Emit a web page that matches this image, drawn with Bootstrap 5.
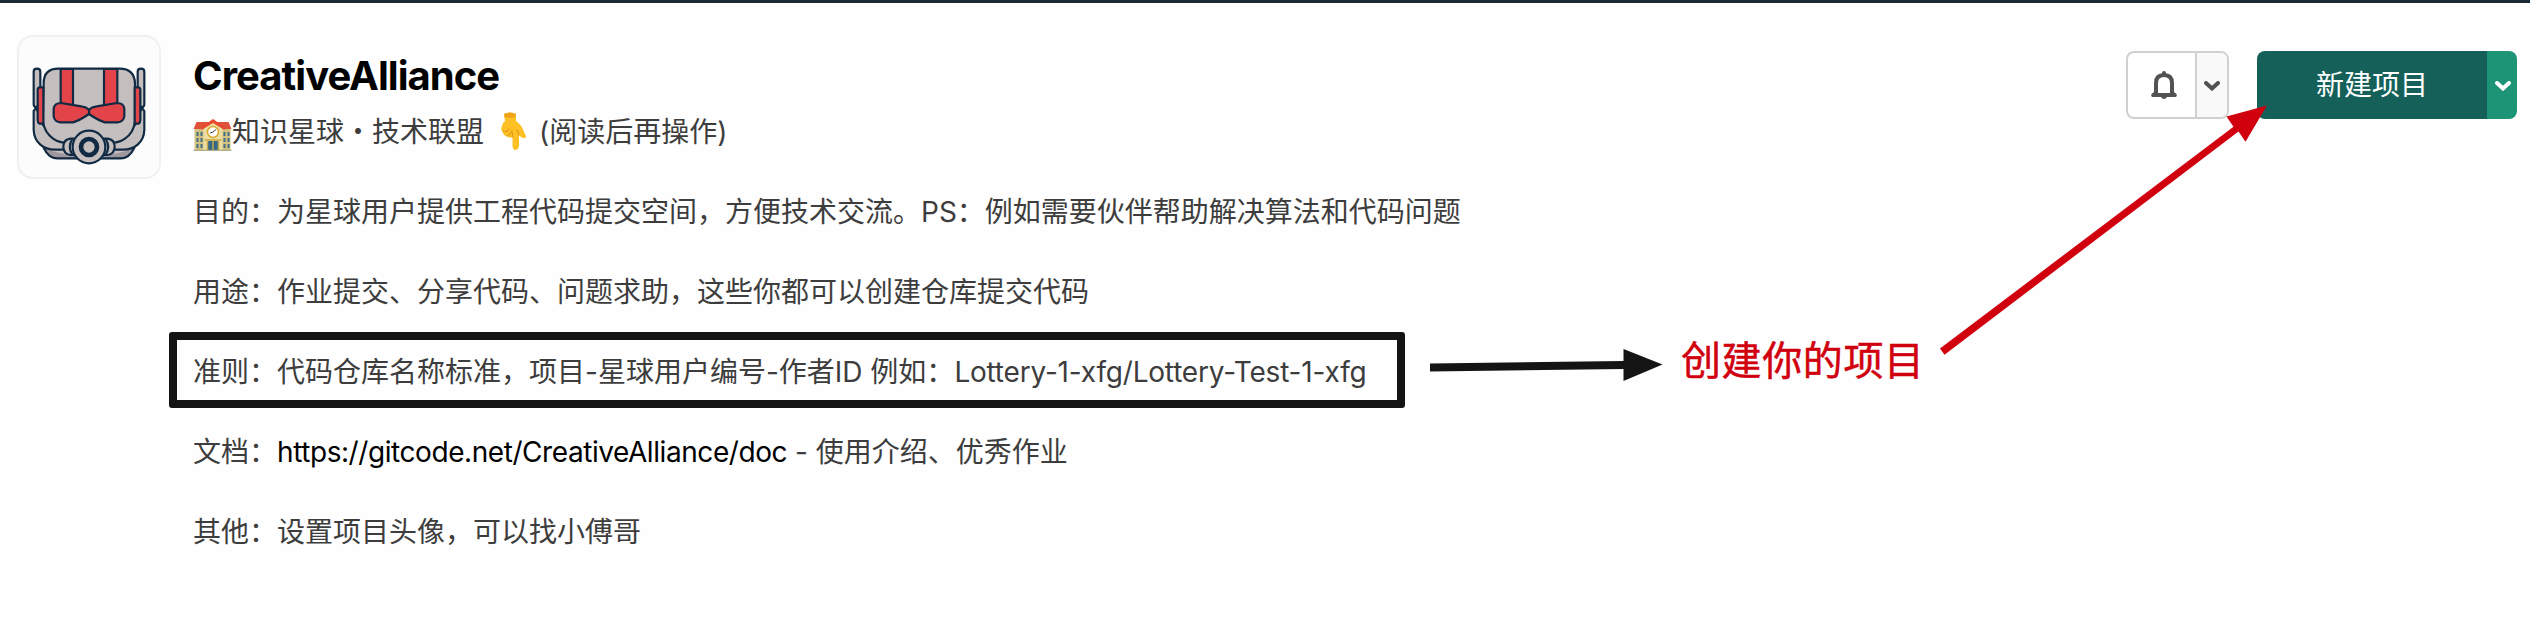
<!DOCTYPE html>
<html lang="zh-CN">
<head>
<meta charset="utf-8">
<title>CreativeAlliance</title>
<link href="https://cdn.jsdelivr.net/npm/bootstrap@5.3.0/dist/css/bootstrap.min.css" rel="stylesheet">
<style>
body{font-family:Inter,"Noto Sans CJK SC",sans-serif;background:#fefefe;color:#3d3d3d;height:618px;overflow:hidden}
svg{display:block}
.topline{height:3px;background:#1c2936}
.avatar{width:144px;height:144px;border:2px solid #f0f0f0;border-radius:16px;background:#fcfcfc}
.group-head{padding:32px 13px 0 17px;gap:32px}
.group-name{font-size:40px;line-height:48px;font-weight:700;color:#000;letter-spacing:-.95px;margin:17px 0 0}
.intro{font-size:28px;line-height:40px;white-space:nowrap}
.intro p{margin:0 0 40px;height:40px}
.intro .subtitle{margin-top:12px}
.intro a{color:#000;text-decoration:none;letter-spacing:-.43px}
.repo{letter-spacing:-.2px}
.school{width:39px;height:32px;margin-top:5px}
.hand{width:28px;height:38px;margin:-2px 11px 0 16px}
.rule-box{border:8px solid #141414;border-radius:3px;left:-24px;top:-20px;width:1236px;height:76px}
.actions{padding-top:16px;gap:28px}
.split{height:68px;border-radius:8px;overflow:hidden}
.btn-notify{width:103px;border:2px solid #d0d0d0;background:#fff}
.btn-notify .drop{width:32px;background:#f9f9f9;border-left:2px solid #d0d0d0}
.btn-create{width:260px;color:#fff;font-size:28px;font-weight:500}
.btn-create .main-part{background:#15615a}
.btn-create .drop{width:30px;background:#1c9475}
.split button{border:0;padding:0;background:none;color:inherit}
.drop svg{margin-top:2px}
.btn-create .drop svg{margin-left:2px}
.note-text{left:1681px;top:331px;font-size:40px;line-height:60px;letter-spacing:.6px;color:#d1000e;-webkit-text-stroke:.5px #d1000e}
.arrows{left:0;top:0;pointer-events:none}
</style>
</head>
<body class="position-relative">
<div class="topline"></div>
<header class="group-head d-flex align-items-start">
  <div class="avatar flex-shrink-0">
    <svg width="140" height="140" viewBox="57 111 420 420" stroke="#102a43" stroke-width="6.5" stroke-linejoin="round" stroke-linecap="round" fill="#c4bebe">
      <path d="M131 443Q146 475 172 475H362Q388 475 403 443Z" fill="#9f979e"/>
      <path d="M145 449Q190 467 267 467T389 449L398 430H136Z" stroke="none"/>
      <path d="M101 313V215Q101 206 111 206T121 215V313L108 322Q101 321 101 313ZM433 313V215Q433 206 423 206T413 215V313L426 322Q433 321 433 313Z"/>
      <path d="M109 323L101 333V390Q102 417 121 434Q138 449 165 449H369Q396 449 413 434Q432 417 433 390V333L425 323L405 375H129Z"/>
      <path d="M131 250Q131 206 175 206H359Q403 206 405 250V365Q401 398 375 416Q356 430 320 430H216Q178 430 159 416Q133 396 129 365Z"/>
      <path d="M182 207H219V318H182ZM312 207H352V318H312Z" fill="#e34449"/>
      <path d="M161 325Q164 309 183 309L244 319Q259 321 267 329Q275 321 290 319L351 309Q370 309 373 325V350Q370 366 352 367H315Q296 362 267 342Q238 362 219 367H182Q164 366 161 350Z" fill="#e34449"/>
      <path d="M267 328V341"/>
      <path d="M118 262H130V371H118Q113 368 113 360V270Q113 263 118 262ZM416 262H404V371H416Q421 368 421 360V270Q421 263 416 262Z" fill="#e34449"/>
      <path d="M235 416H211Q190 419 190 440T211 465H235ZM299 416H323Q344 419 344 440T323 465H299Z"/>
      <path d="M216 419Q203 440 216 462M318 419Q331 440 318 462" fill="none"/>
      <circle cx="267" cy="441" r="49"/>
      <circle cx="267" cy="441" r="24" stroke-width="14"/>
    </svg>
  </div>
  <div class="flex-grow-1">
    <h1 class="group-name">CreativeAlliance</h1>
    <div class="intro">
      <p class="subtitle d-flex align-items-center">
        <svg class="school" viewBox="0 0 38 32">
          <path d="M1 9H37V31H1Z" fill="#d3c17e"/>
          <path d="M3 3H35L38 10H0Z" fill="#e0533a"/>
          <path d="M10 9L19.5 2L29 9V31H10Z" fill="#ecdda3"/>
          <path d="M8 8L19.5 0L31 8V11L19.5 4L8 11Z" fill="#e8492f"/>
          <path d="M3 13h2v4H3zm4 0h2v4H7zM3 19h2v4H3zm4 0h2v4H7zM3 25h2v4H3zm4 0h2v4H7zM30 13h2v4h-2zm4 0h2v4h-2zm-4 6h2v4h-2zm4 0h2v4h-2zm-4 6h2v4h-2zm4 0h2v4h-2z" fill="#456f8b"/>
          <circle cx="19.500" cy="13" r="5.500" fill="#fff" stroke="#d9a92e" stroke-width="1.500"/>
          <path d="M19.500 13L22.500 10.500M19.500 13L16.500 14" stroke="#444" stroke-width="1"/>
          <path d="M14 22H25V31H14Z" fill="#34688a"/>
          <path d="M11 21H28M14 22V31M19.500 22V31M25 22V31" stroke="#c7a947" stroke-width="1.500"/>
          <path d="M0 31.300H38" stroke="#9b9c73"/>
        </svg><span>知识星球・技术联盟</span>
        <svg class="hand" viewBox="0 0 28 38">
          <path d="M4 2Q10-1 16 2L16 9Q22 13 24 20Q27 25 25 26Q22 27 19 23V34Q18 38 15.500 38T12.500 34V25Q9 27 7 24Q3 24 3 20Q0 18 2 14Q2 11 5 9Z" fill="#fdc126"/>
          <path d="M4 2Q10-1 16 2L15.500 5Q10 7 4.500 5Z" fill="#eea51c"/>
          <path d="M3 19Q6 21 9 17M7 24Q10 23 12 19M12.500 25V21M19 23L17 18" fill="none" stroke="#e79a17" stroke-width="1.300" stroke-linecap="round"/>
        </svg>
        <span>(阅读后再操作)</span>
      </p>
      <p>目的：为星球用户提供工程代码提交空间，方便技术交流。PS：例如需要伙伴帮助解决算法和代码问题</p>
      <p>用途：作业提交、分享代码、问题求助，这些你都可以创建仓库提交代码</p>
      <p class="position-relative">准则：代码仓库名称标准，项目-星球用户编号-作者ID 例如：<span class="repo">Lottery-1-xfg/Lottery-Test-1-xfg</span><span class="rule-box position-absolute"></span></p>
      <p>文档：<a href="#">https://gitcode.net/CreativeAlliance/doc</a> - 使用介绍、优秀作业</p>
      <p>其他：设置项目头像，可以找小傅哥</p>
    </div>
  </div>
  <div class="actions d-flex flex-shrink-0">
    <div class="split btn-notify d-flex">
      <button class="flex-grow-1 d-flex align-items-center justify-content-center ps-1" aria-label="通知">
        <svg width="28" height="28" viewBox="0 0 28 28"><path d="M6 24V12Q6 4 14 4T22 12V24" fill="none" stroke="#525252" stroke-width="4"/><path d="M12 3V2Q12 0 14 0T16 2V3ZM4 21H24L26.500 23Q27.500 26 25 26H17Q16 28 14 28T11 26H3Q.5 26 1.500 23Z" fill="#525252"/><path d="M8 14h12v8H8z" fill="#fff"/></svg>
      </button>
      <button class="drop d-flex align-items-center justify-content-center" aria-label="更多">
        <svg width="16" height="10" viewBox="0 0 16 10"><path d="M2 2L8 7.500L14 2" fill="none" stroke="#525252" stroke-width="4" stroke-linecap="round"/></svg>
      </button>
    </div>
    <div class="split btn-create d-flex">
      <button class="main-part flex-grow-1">新建项目</button>
      <button class="drop d-flex align-items-center justify-content-center" aria-label="更多">
        <svg width="16" height="10" viewBox="0 0 16 10"><path d="M2 2L8 7.500L14 2" fill="none" stroke="#fff" stroke-width="4" stroke-linecap="round"/></svg>
      </button>
    </div>
  </div>
</header>
<div class="note-text position-absolute">创建你的项目</div>
<svg class="arrows position-absolute" width="2530" height="618" viewBox="0 0 2530 618">
  <path d="M1430 363.500L1623.500 361V349L1662.500 364.500L1623.500 381V369L1430 371.500Z" fill="#141414"/>
  <path d="M1940 348.500L2233.500 126.700L2226.500 116.500L2267 105.500L2245.500 141.700L2238.500 131.500L1944.500 354.800Z" fill="#d1000e"/>
</svg>
<script src="https://cdn.jsdelivr.net/npm/bootstrap@5.3.0/dist/js/bootstrap.bundle.min.js"></script>
</body>
</html>
